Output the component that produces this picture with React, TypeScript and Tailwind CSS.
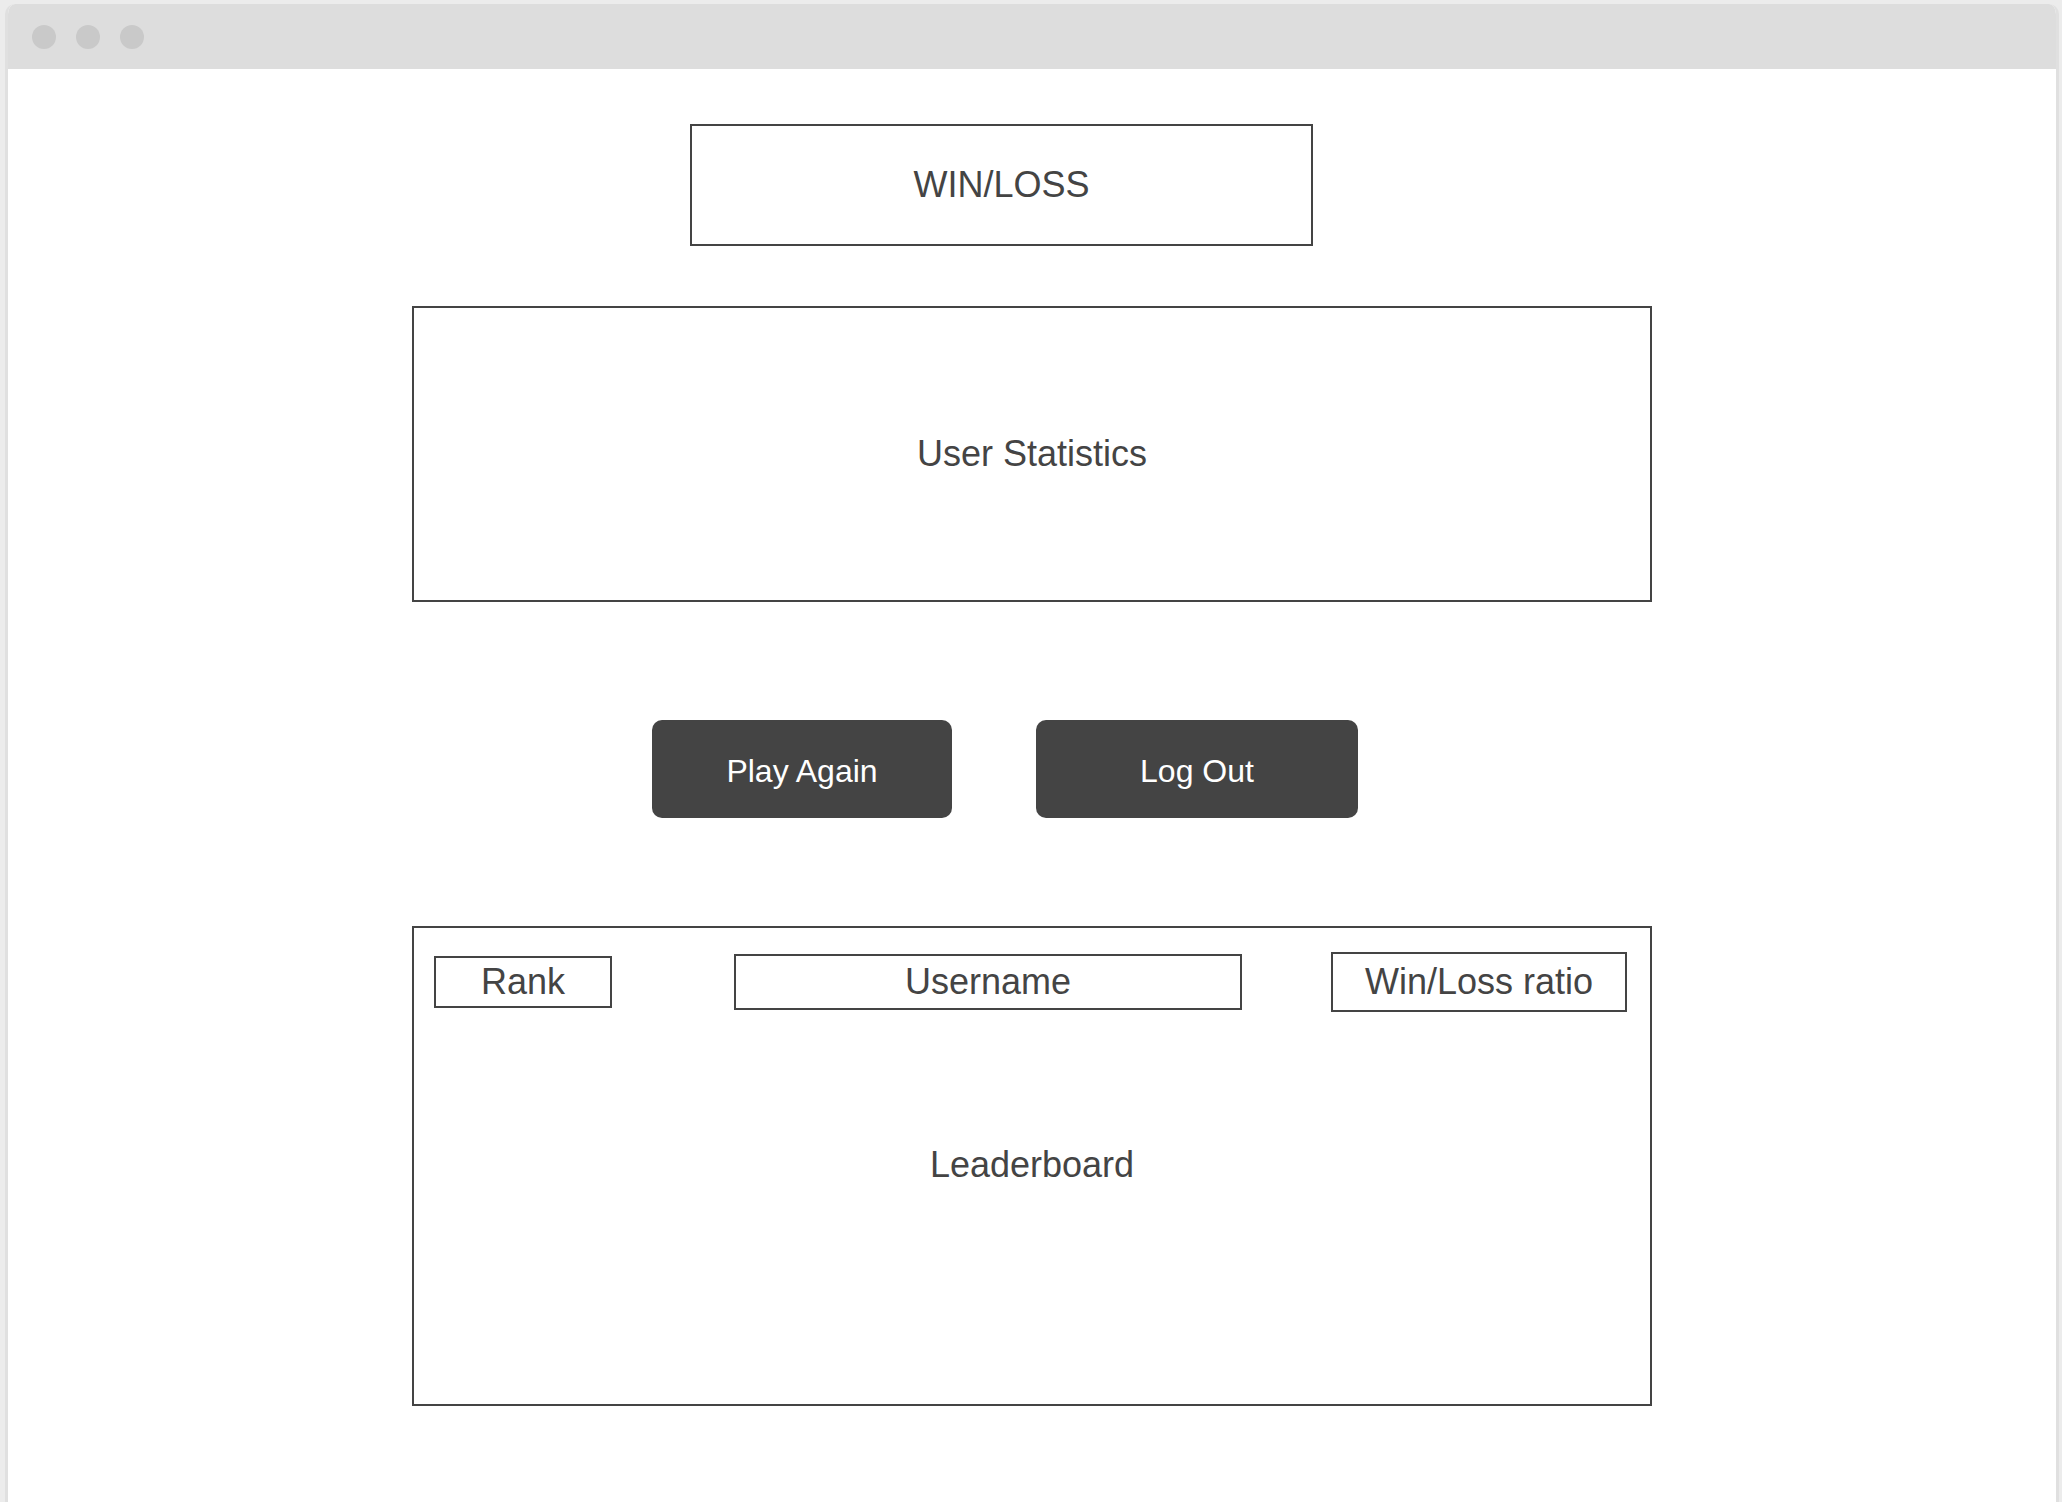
import React from "react";

const font = { fontFamily: '"Liberation Sans", Arial, sans-serif' };

export default function App() {
  return (
    <div
      className="h-screen w-full overflow-hidden bg-[#ececec] pt-[4px] pl-[5px] pr-[3px]"
      style={font}
    >
      <div className="flex h-full flex-col overflow-hidden rounded-t-[10px] border-x-[3px] border-[#e0e0e0] bg-white">
        {/* Title bar */}
        <div className="flex h-[65px] shrink-0 items-center gap-[20px] bg-[#dddddd] pl-[24px]">
          <div className="h-[24px] w-[24px] rounded-full bg-[#c9c9c9]" />
          <div className="h-[24px] w-[24px] rounded-full bg-[#c9c9c9]" />
          <div className="h-[24px] w-[24px] rounded-full bg-[#c9c9c9]" />
        </div>

        {/* Content */}
        <div className="flex flex-1 flex-col text-[#444444]">
          <div className="ml-[682px] mt-[55px] flex h-[122px] w-[623px] items-center justify-center border-2 border-[#444444] text-[36px]">
            WIN/LOSS
          </div>

          <div className="ml-[404px] mt-[60px] flex h-[296px] w-[1240px] items-center justify-center border-2 border-[#444444] text-[36px]">
            User Statistics
          </div>

          <div className="ml-[644px] mt-[118px] flex gap-[84px]">
            <button className="flex h-[98px] w-[300px] items-center justify-center rounded-[10px] bg-[#444444] pt-[4px] text-[32px] text-white">
              Play Again
            </button>
            <button className="flex h-[98px] w-[322px] items-center justify-center rounded-[10px] bg-[#444444] pt-[4px] text-[32px] text-white">
              Log Out
            </button>
          </div>

          <div className="ml-[404px] mt-[108px] flex h-[480px] w-[1240px] flex-col border-2 border-[#444444]">
            <div className="mt-[24px] flex h-[60px] items-center pl-[20px]">
              <div className="flex h-[52px] w-[178px] items-center justify-center border-2 border-[#444444] text-[36px]">
                Rank
              </div>
              <div className="ml-[122px] flex h-[56px] w-[508px] items-center justify-center border-2 border-[#444444] text-[36px]">
                Username
              </div>
              <div className="ml-[89px] flex h-[60px] w-[296px] items-center justify-center border-2 border-[#444444] text-[36px]">
                Win/Loss ratio
              </div>
            </div>
            <div className="mt-[133px] h-[40px] text-center text-[36px] leading-[40px]">
              Leaderboard
            </div>
          </div>
        </div>
      </div>
    </div>
  );
}
